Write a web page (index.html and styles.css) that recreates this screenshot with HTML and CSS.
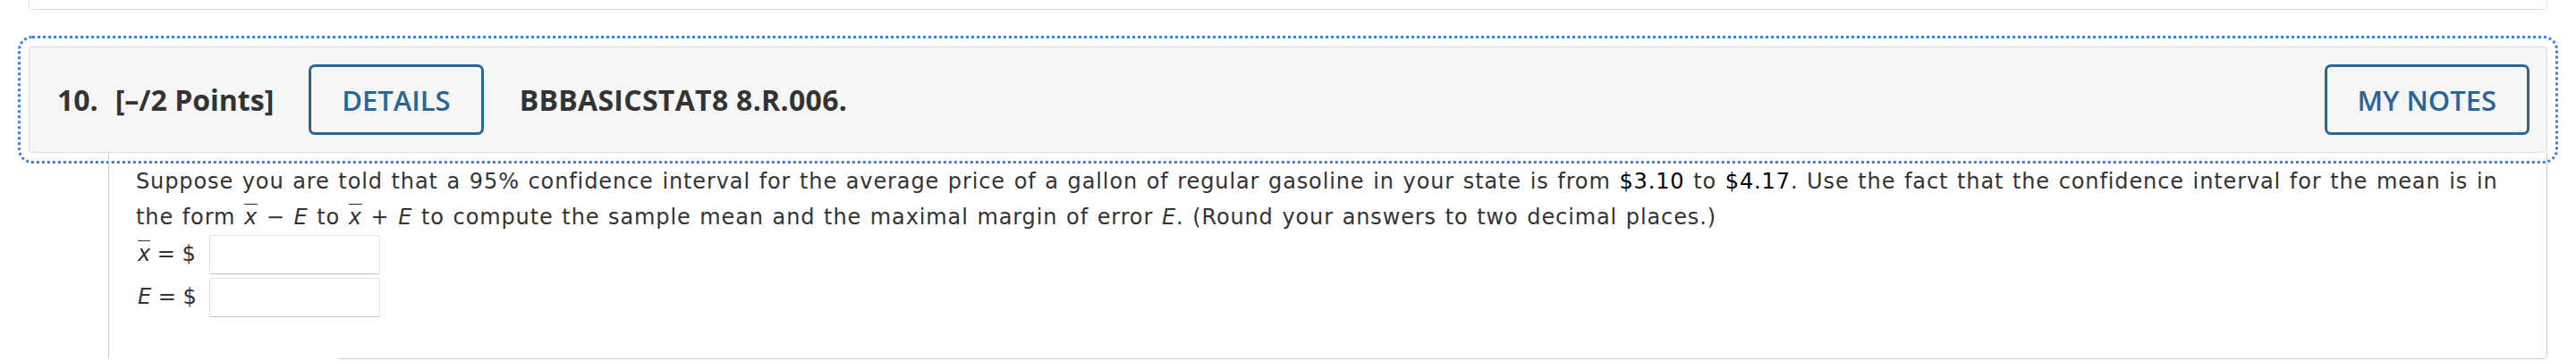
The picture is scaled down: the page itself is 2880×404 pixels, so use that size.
FILE: index.html
```html
<!DOCTYPE html>
<html lang="en">
<head>
<meta charset="utf-8">
<title>Question 10</title>
<link rel="stylesheet" href="styles.css">
</head>
<body>
<div class="page">
  <div class="prev-card"></div>
  <section class="question">
    <header class="qhead">
      <span class="qnum">10.</span>
      <span class="qpts">[–/2 Points]</span>
      <button class="btn btn-details" type="button">DETAILS</button>
      <span class="qid">BBBASICSTAT8 8.R.006.</span>
      <button class="btn btn-notes" type="button">MY NOTES</button>
    </header>
    <div class="qbody">
      <p class="prompt">Suppose you are told that a 95% confidence interval for the average price of a gallon of regular gasoline in your state is from <span class="val">$3.10</span> to <span class="val">$4.17</span>. Use the fact that the confidence interval for the mean is in the form <span class="xbar">x</span> − <i>E</i> to <span class="xbar">x</span> + <i>E</i> to compute the sample mean and the maximal margin of error <i>E</i>. (Round your answers to two decimal places.)</p>
      <div class="answer">
        <label class="alabel"><span class="xbar">x</span> = $</label>
        <input class="ainput" type="text">
      </div>
      <div class="answer">
        <label class="alabel"><i>E</i> = $</label>
        <input class="ainput" type="text">
      </div>
    </div>
  </section>
</div>
</body>
</html>
```
FILE: styles.css
```css
html, body {
  margin: 0;
  padding: 0;
  background: #ffffff;
}

.page {
  margin: 0 32px;
}

.prev-card {
  height: 10px;
  border: 1px solid #dddddd;
  border-top: none;
  border-radius: 0 0 4px 4px;
}

.question {
  margin-top: 41px;
}

.qhead {
  display: flex;
  align-items: center;
  height: 117px;
  padding: 0 19px 0 31px;
  background: #f6f6f6;
  border: 1px solid #dcdcdc;
  border-radius: 4px;
  outline: 3px dotted #3a7fdc;
  outline-offset: 9px;
  font-family: "Open Sans", "Liberation Sans", sans-serif;
  color: #333333;
}

.qnum,
.qpts,
.qid {
  font-size: 32px;
  font-weight: 700;
}

.qpts {
  margin-left: 19px;
}

.qid {
  letter-spacing: 0.3px;
}

.btn {
  height: 79px;
  padding: 0 34px;
  background: transparent;
  border: 3px solid #29649a;
  border-radius: 7px;
  color: #29649a;
  font-family: "Open Sans", "Liberation Sans", sans-serif;
  font-size: 31px;
  font-weight: 600;
}

.btn-details {
  margin: 0 40px 0 39px;
}

.btn-notes {
  margin-left: auto;
}

.qbody {
  position: relative;
  margin-left: 89px;
  padding: 13px 28px 46px 30px;
  border-left: 1px solid #d0d0d0;
  border-right: 1px solid #cccccc;
  border-bottom: 1px solid #cccccc;
  border-bottom-right-radius: 5px;
  font-family: "DejaVu Sans", Verdana, sans-serif;
  font-size: 24px;
  letter-spacing: 0.88px;
  word-spacing: 1.2px;
  line-height: 39.5px;
  color: #333333;
}

.qbody::after {
  content: "";
  position: absolute;
  left: 0;
  bottom: -1px;
  width: 257px;
  height: 1px;
  background: #ffffff;
}

.prompt {
  margin: 0;
}

.val {
  color: #000000;
}

.xbar {
  font-style: italic;
  text-decoration: overline;
  text-decoration-thickness: 1px;
}

.answer {
  display: flex;
  align-items: center;
  height: 44px;
}

.answer + .answer {
  margin-top: 4px;
}

.alabel {
  width: 76px;
  padding-left: 2px;
  box-sizing: border-box;
  white-space: nowrap;
  word-spacing: 0;
  letter-spacing: 0;
}

.ainput {
  width: 191px;
  height: 44px;
  box-sizing: border-box;
  margin: 0 0 0 6px;
  border: 1px solid #e2e2e2;
  border-bottom-color: #c4c4c4;
  border-radius: 2px;
  background: #ffffff;
  padding: 0 6px;
  font-family: "DejaVu Sans", Verdana, sans-serif;
  font-size: 20px;
}
```
